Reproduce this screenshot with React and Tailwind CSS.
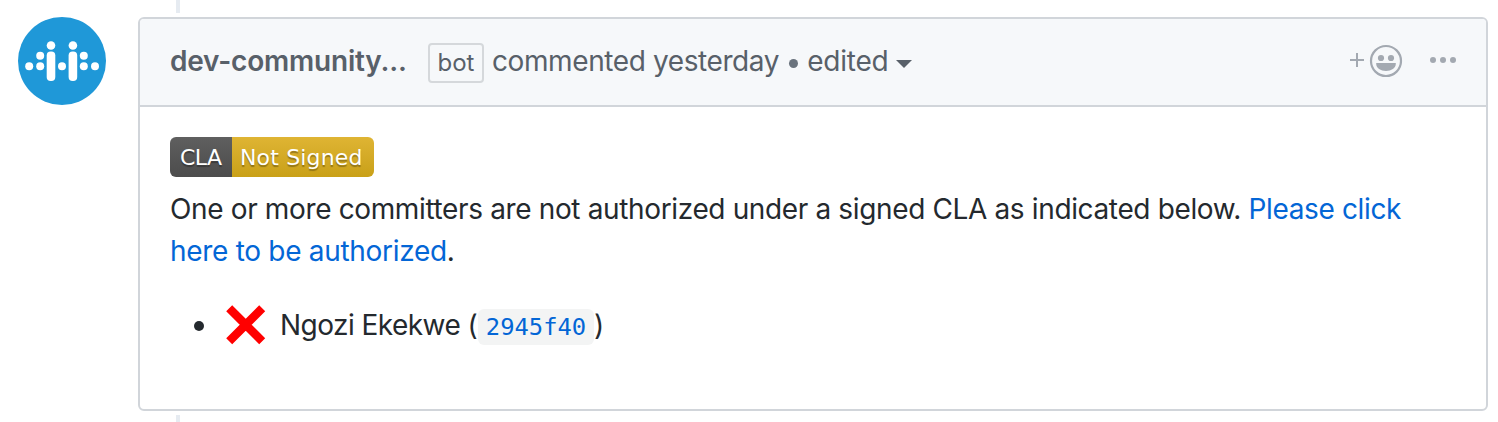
function Avatar() {
  return (
    <svg viewBox="0 0 88 88" className="mt-[17px] block size-[88px] shrink-0">
      <circle cx="44" cy="44" r="44" fill="#1f98d8" />
      <g fill="#fff">
        <circle cx="11.2" cy="49.2" r="4" />
        <circle cx="22.2" cy="49.2" r="4" />
        <circle cx="22.2" cy="38.7" r="4" />
        <circle cx="33" cy="28.5" r="4.3" />
        <rect x="28.7" y="34.5" width="8.6" height="29.5" rx="4" />
        <circle cx="44" cy="49.2" r="4" />
        <circle cx="54.9" cy="28.5" r="4.3" />
        <rect x="50.6" y="34.5" width="8.6" height="29.5" rx="4" />
        <circle cx="65.8" cy="38.7" r="4" />
        <circle cx="65.8" cy="49.2" r="4" />
        <circle cx="77" cy="49.2" r="4" />
      </g>
    </svg>
  );
}

function AddReaction() {
  return (
    <svg viewBox="0 0 54 34" className="block h-[34px] w-[54px]" fill="#a3a9b1">
      <rect x="1" y="15" width="14" height="2" />
      <rect x="7" y="9" width="2" height="14" />
      <circle cx="37" cy="17" r="15" fill="none" stroke="#a3a9b1" strokeWidth="2.2" />
      <circle cx="32" cy="14" r="3.1" />
      <circle cx="42" cy="14" r="3.1" />
      <path d="M27.2 19h19.6v1c0 4-4.5 7-9.8 7s-9.8-3-9.8-7z" />
    </svg>
  );
}

function Header() {
  return (
    <header className="flex h-[88px] items-center border-b-2 border-[#d1d5da] bg-[#f6f8fa] pl-[30px] text-[28px] leading-[42px] text-[#586069]">
      <strong className="mb-[2px] w-[258px] shrink-0 whitespace-nowrap font-semibold tracking-[-0.2px]">dev-community...</strong>
      <span className="mt-[2px] flex h-[40px] w-[56px] shrink-0 items-center justify-center rounded-[4px] border-2 border-[#d5d8db] text-[24px]">
        bot
      </span>
      <span className="mb-[2px] ml-[8px] whitespace-nowrap tracking-[-0.4px]">commented yesterday</span>
      <span className="ml-[10px] mt-[3px] size-[9px] rounded-full bg-[#6a737d]" />
      <span className="mb-[2px] ml-[9px] whitespace-nowrap tracking-[-0.2px]">edited</span>
      <svg viewBox="0 0 16 8" className="ml-[7px] mt-[4px] h-[8px] w-[16px]">
        <path d="M0 0h16L8 8z" fill="#586069" />
      </svg>
      <div className="mb-[2px] ml-auto flex items-center pr-[30px]">
        <AddReaction />
        <svg viewBox="0 0 26 6" className="mb-[2px] ml-[27px] h-[6px] w-[26px]" fill="#a3a9b1">
          <circle cx="3" cy="3" r="3" />
          <circle cx="13" cy="3" r="3" />
          <circle cx="23" cy="3" r="3" />
        </svg>
      </div>
    </header>
  );
}

function Badge() {
  return (
    <div className="flex h-[40px] w-[204px] overflow-hidden whitespace-nowrap rounded-[6px] font-['DejaVu_Sans',sans-serif] text-[22px] leading-[41px] text-white [text-shadow:0_2px_1px_rgba(1,1,1,0.3)]">
      <span className="w-[62px] bg-linear-to-b from-[#5f5f5f] to-[#4c4c4c] pl-[10px] tracking-[-0.5px]">CLA</span>
      <span className="w-[142px] bg-linear-to-b from-[#dfb433] to-[#c9a017] pl-[8px] tracking-[0.15px]">Not Signed</span>
    </div>
  );
}

function Body() {
  return (
    <div className="px-[30px] pt-[30px] text-[28px] leading-[42px] tracking-[-0.36px] text-[#24292e]">
      <Badge />
      <p className="mt-[11px] whitespace-nowrap">
        One or more committers are not authorized under a signed CLA as indicated below.{" "}
        <a className="text-[#0366d6]">
          Please click
          <br />
          <span className="tracking-[-0.3px]">here to be authorized</span>
        </a>
        .
      </p>
      <ul className="mt-[32px]">
        <li className="flex items-center whitespace-nowrap pl-[24px]">
          <span className="mt-[2px] size-[10px] rounded-full bg-[#24292e]" />
          <svg viewBox="0 0 40 40" className="ml-[22px] size-[40px]">
            <path d="M3.2 3.2l33 33m0-33l-33 33" stroke="#f00" strokeWidth="8.5" />
          </svg>
          <span className="ml-[14px] w-[198px] tracking-[-0.55px]">Ngozi Ekekwe (</span>
          <code className="mt-[3px] flex h-[36px] w-[116px] items-center justify-center rounded-[6px] bg-[#f3f4f4] font-['DejaVu_Sans_Mono',monospace] text-[23.8px] tracking-normal text-[#0366d6]">
            2945f40
          </code>
          <span>)</span>
        </li>
      </ul>
    </div>
  );
}

export default function App() {
  return (
    <div className="flex h-[422px] w-[1498px] gap-[32px] overflow-hidden bg-white pl-[18px] pr-[10px] font-[Inter,sans-serif]">
      <Avatar />
      <div className="flex flex-1 flex-col gap-[4px]">
        <div className="ml-[38px] h-[13px] w-[4px] shrink-0 bg-[#e6ebf1]" />
        <article className="h-[394px] shrink-0 overflow-hidden rounded-[6px] border-2 border-[#d1d5da]">
          <Header />
          <Body />
        </article>
        <div className="ml-[38px] h-[7px] w-[4px] shrink-0 bg-[#e6ebf1]" />
      </div>
    </div>
  );
}
